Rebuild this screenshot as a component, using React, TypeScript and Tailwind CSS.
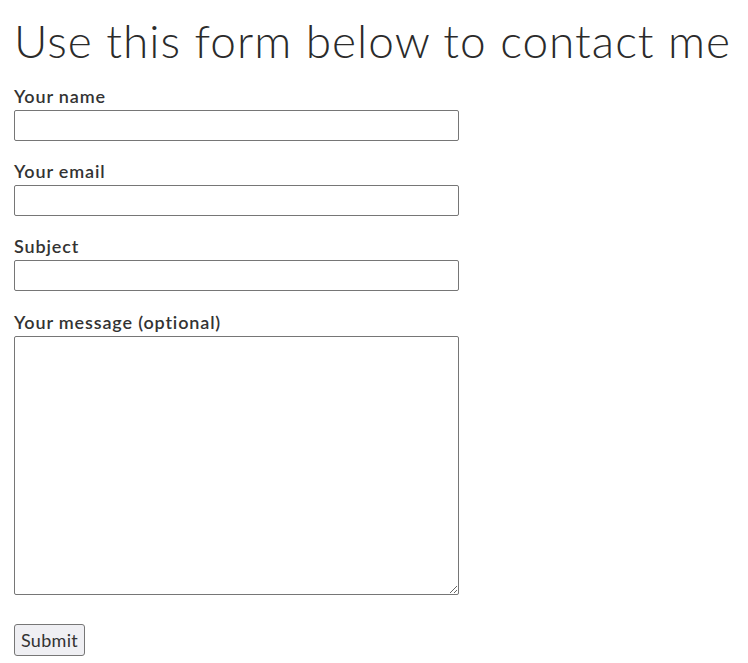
import React from "react";

const font = { fontFamily: "Lato, 'Noto Sans', sans-serif" };

function Field({ label, tall }: { label: string; tall?: boolean }) {
  return (
    <div className="flex flex-col">
      <label className="block text-[18px] leading-[22px] font-semibold text-[#333] tracking-[0.85px]">{label}</label>
      {tall ? (
        <textarea className="mt-[3px] w-[445px] h-[259px] border border-[#767676] rounded-[2px] bg-white" />
      ) : (
        <input className="mt-[3px] w-[445px] h-[31px] border border-[#767676] rounded-[2px] bg-white" />
      )}
    </div>
  );
}

export default function App() {
  return (
    <div className="w-[748px] h-[663px] bg-white px-[14px] overflow-hidden" style={font}>
      <h1 className="text-[46px] leading-[56px] font-light text-[#2b2b2b] tracking-[1px] pt-[13px] whitespace-nowrap">
        Use this form below to contact me
      </h1>
      <form className="flex flex-col gap-[19px] mt-[16px]">
        <Field label="Your name" />
        <Field label="Your email" />
        <Field label="Subject" />
        <div className="mt-[1px]">
          <Field label="Your message (optional)" tall />
        </div>
        <div className="mt-[10px]">
          <button type="button" className="h-[32px] w-[71px] text-[18px] leading-[22px] tracking-[0.3px] text-[#333] bg-[#efeff3] border border-[#767676] rounded-[3px]">
            Submit
          </button>
        </div>
      </form>
    </div>
  );
}
